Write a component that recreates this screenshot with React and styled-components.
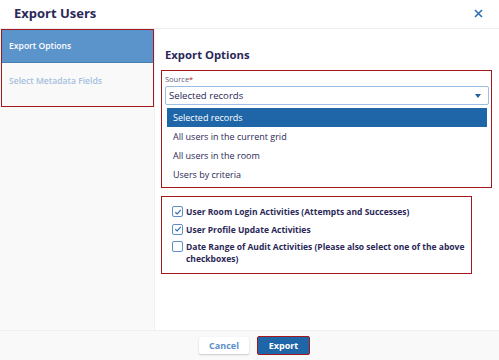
import React from 'react'
import styled, { createGlobalStyle } from 'styled-components'

const Global = createGlobalStyle`
body { margin: 0; font-family: "Open Sans", "Liberation Sans", sans-serif; background: #fff; }
* { box-sizing: border-box; }
`
const Dialog = styled.div`
width: 499px;
height: 360px;
display: flex;
flex-direction: column;
background: #fff;
color: #2b2857;
`
const Header = styled.div`
height: 29px;
flex: none;
display: flex;
align-items: center;
justify-content: space-between;
padding: 0 16px 2px 14px;
border-bottom: 1px solid #eceef4;
`
const Title = styled.div`
font-size: 13px;
font-weight: 700;
color: #2b2857;
`
const Close = styled.div`
color: #2f6fb3;
display: flex;
`
const Body = styled.div`
flex: 1;
display: flex;
min-height: 0;
`
const Sidebar = styled.div`
width: 155px;
flex: none;
background: #f9f9f9;
border-right: 1px solid #f0f0f0;
`
const NavGroup = styled.div`
border: 1.5px solid #a2181d;
margin-left: 1px;
background: #f9f9f9;
`
const NavItem = styled.div`
height: ${p => (p.$active ? '33px' : '43px')};
display: flex;
align-items: center;
padding-left: 7px;
padding-bottom: ${p => (p.$active ? '0' : '7px')};
font-size: 8.6px;
font-weight: 600;
background: ${p => (p.$active ? '#5b93cb' : 'transparent')};
color: ${p => (p.$active ? '#fff' : '#a5c0de')};
border-bottom: ${p => (p.$active ? '1px solid #4a7fb6' : 'none')};
`
const Main = styled.div`
flex: 1;
padding: 12px 6px 0 6px;
display: flex;
flex-direction: column;
`
const Heading = styled.div`
font-size: 11.3px;
font-weight: 700;
padding-left: 4px;
height: 27px;
display: flex;
align-items: center;
`
const RedBox = styled.div`
border: 1.5px solid #a2181d;
margin-top: ${p => p.$mt || 0}px;
width: ${p => p.$w}px;
padding: ${p => p.$pad};
`
const Label = styled.div`
font-size: 7.5px;
color: #5c5a78;
height: 10px;
line-height: 10px;
margin-bottom: 2px;
span { color: #c0202a; }
`
const Select = styled.div`
height: 19px;
border: 1px solid #9bbfe2;
border-radius: 2px;
display: flex;
align-items: center;
justify-content: space-between;
padding: 0 7px 0 3px;
font-size: 9.6px;
color: #2b2857;
`
const Caret = styled.div`
width: 0;
height: 0;
border-left: 3px solid transparent;
border-right: 3px solid transparent;
border-top: 4px solid #1f5f9e;
`
const List = styled.div`
margin: 3px 2px 0 2px;
padding-bottom: 3px;
display: flex;
flex-direction: column;
`
const Option = styled.div`
height: 19px;
display: flex;
align-items: center;
padding-left: 6px;
font-size: 9px;
background: ${p => (p.$sel ? '#1f66a8' : 'transparent')};
color: ${p => (p.$sel ? '#fff' : '#2b2857')};
`
const CheckRow = styled.label`
display: flex;
align-items: flex-start;
gap: 3px;
font-size: 8.5px;
font-weight: 700;
line-height: 11.5px;
color: #2b2857;
`
const Box = styled.span`
width: 11px;
height: 11px;
flex: none;
border: 1px solid #5f8fc6;
border-radius: 2px;
background: #fff;
display: flex;
align-items: center;
justify-content: center;
`
const Checks = styled.div`
display: flex;
flex-direction: column;
gap: 6px;
`
const Footer = styled.div`
height: 30px;
flex: none;
background: #f9f9f9;
border-top: 1px solid #efefef;
display: flex;
align-items: center;
padding-left: 199px;
gap: 8px;
`
const Button = styled.button`
height: ${p => (p.$primary ? '19px' : '17px')};
width: ${p => (p.$primary ? '53px' : '50px')};
border-radius: 2px;
font-family: inherit;
font-size: 9px;
font-weight: 700;
cursor: pointer;
background: ${p => (p.$primary ? '#1f66a8' : '#fff')};
color: ${p => (p.$primary ? '#fff' : '#5d8fc6')};
border: ${p => (p.$primary ? '1.5px solid #a2181d' : 'none')};
box-shadow: ${p => (p.$primary ? 'none' : '0 1px 2px rgba(0,0,0,0.2)')};
padding: 0;
`

function Check({ checked, children }) {
  return (
    <CheckRow>
      <Box>
        {checked && (
          <svg width="8" height="8" viewBox="0 0 8 8">
            <path d="M1.3 4.2 L3.2 6 L6.8 1.8" fill="none" stroke="#2f6fb3" strokeWidth="1.2" />
          </svg>
        )}
      </Box>
      <span>{children}</span>
    </CheckRow>
  )
}

export default function App() {
  return (
    <Dialog>
      <Global />
      <Header>
        <Title>Export Users</Title>
        <Close>
          <svg width="9" height="9" viewBox="0 0 9 9">
            <path d="M1 1 L8 8 M8 1 L1 8" stroke="#2f6fb3" strokeWidth="1.6" />
          </svg>
        </Close>
      </Header>
      <Body>
        <Sidebar>
          <NavGroup>
            <NavItem $active>Export Options</NavItem>
            <NavItem>Select Metadata Fields</NavItem>
          </NavGroup>
        </Sidebar>
        <Main>
          <Heading>Export Options</Heading>
          <RedBox $mt={2} $w={331} $pad="3px 2px 0 3px">
            <Label>Source<span>*</span></Label>
            <Select>
              Selected records
              <Caret />
            </Select>
            <List>
              <Option $sel>Selected records</Option>
              <Option>All users in the current grid</Option>
              <Option>All users in the room</Option>
              <Option>Users by criteria</Option>
            </List>
          </RedBox>
          <RedBox $mt={8} $w={311} $pad="9px 2px 9px 10px">
            <Checks>
              <Check checked>User Room Login Activities (Attempts and Successes)</Check>
              <Check checked>User Profile Update Activities</Check>
              <Check>Date Range of Audit Activities (Please also select one of the above checkboxes)</Check>
            </Checks>
          </RedBox>
        </Main>
      </Body>
      <Footer>
        <Button>Cancel</Button>
        <Button $primary>Export</Button>
      </Footer>
    </Dialog>
  )
}
